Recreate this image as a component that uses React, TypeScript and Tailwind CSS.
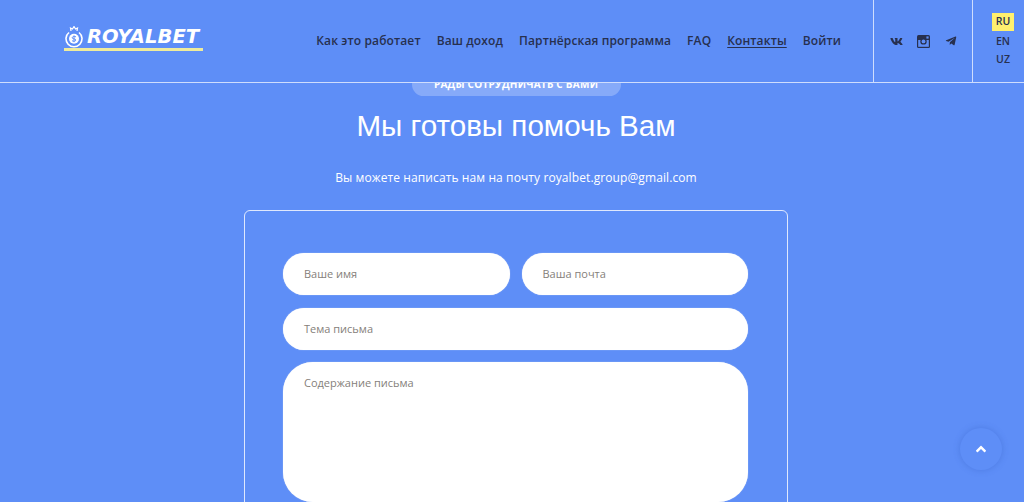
import { FaVk, FaTelegramPlane, FaAngleUp } from 'react-icons/fa'

const navLinks = ['Как это работает', 'Ваш доход', 'Партнёрская программа', 'FAQ', 'Контакты', 'Войти']

function Logo() {
  return (
    <div className="mb-[6px] flex w-[139px] flex-col">
      <div className="flex h-[23px] items-center gap-[4px]">
        <svg width="18" height="22" viewBox="0 0 18 22" fill="none" className="ml-[1px] shrink-0">
          {/* crown + coin */}
          <path d="M6 5 L5.5 2 L7.5 3 L9 0.5 L10.5 3 L12.5 2 L12 5" stroke="#fff" strokeWidth="1.2" />
          <path d="M4 6.5 A8 8 0 1 0 14 6.5" stroke="#fff" strokeWidth="1.6" />
          <circle cx="9" cy="12.8" r="5" fill="#fff" />
          <path d="M11 10.9 C9.6 10 7.2 10.4 7.2 11.8 C7.2 13.4 10.8 12.4 10.8 14 C10.8 15.4 8.2 15.6 7 14.7 M9 9.4 V16.2" stroke="#5e8ef7" strokeWidth="1" />
        </svg>
        <span className="font-['DejaVu_Sans',sans-serif] text-[19.5px] leading-[23px] font-bold tracking-[0.1px] text-white italic">ROYALBET</span>
      </div>
      <div className="h-[3px] w-full bg-[#efec9c]" />
    </div>
  )
}

function InstagramOld() {
  return (
    <svg width="13" height="13" viewBox="0 0 13 13" className="shrink-0">
      <rect width="13" height="13" rx="1.5" fill="#27304f" />
      <rect x="1.2" y="5" width="10.6" height="6.8" fill="#5e8ef7" />
      <circle cx="6.5" cy="6.4" r="3.2" fill="#27304f" />
      <circle cx="6.5" cy="6.4" r="1.9" fill="#5e8ef7" />
      <rect x="9.4" y="1.4" width="2.2" height="2.2" fill="#5e8ef7" />
    </svg>
  )
}

function Header() {
  return (
    <header className="absolute top-0 left-0 z-10 flex h-[83px] w-full items-stretch border-b border-white/70 bg-[#5e8ef7] font-['Open_Sans',sans-serif] text-[#27304f]">
      <div className="flex flex-1 items-center justify-between pr-[32px] pl-[64px]">
        <Logo />
        <nav className="flex items-center gap-[16px] text-[12px] font-semibold tracking-[0.12px]">
          {navLinks.map((link) => (
            <a key={link} className={link === 'Контакты' ? 'underline underline-offset-2' : ''}>
              {link}
            </a>
          ))}
        </nav>
      </div>
      <div className="flex w-[100px] items-center justify-center gap-[14.5px] border-x border-white/70">
        <FaVk className="h-[13px] w-[13px]" />
        <InstagramOld />
        <FaTelegramPlane className="h-[12px] w-[12px]" />
      </div>
      <div className="flex w-[51px] flex-col items-center pt-[13px] pl-[9px] text-[10.5px] font-semibold">
        <span className="flex h-[18px] w-[22px] items-center justify-center bg-[#fff06e]">RU</span>
        <span className="mt-[2px] flex h-[18px] items-center">EN</span>
        <span className="flex h-[18px] items-center">UZ</span>
      </div>
    </header>
  )
}

function Field({ label, className }: { label: string; className?: string }) {
  return (
    <div className={`h-[42px] rounded-full bg-white px-[21px] pt-[13px] text-[11px] leading-[16px] text-[#85807a] shadow-[0_0_1px_#dfe5f3] ${className ?? ''}`}>
      {label}
    </div>
  )
}

export default function App() {
  return (
    <div className="relative h-[502px] w-[1024px] overflow-hidden bg-[#5e8ef7] font-['Open_Sans',sans-serif]">
      <Header />

      <main className="flex flex-col items-center pt-[73px] pl-[8px]">
        <div className="flex h-[23px] w-[209px] items-center justify-center rounded-full bg-white/25 text-[10px] font-bold tracking-[0.25px] text-white uppercase">
          Рады сотрудничать с вами
        </div>
        <h1 className="mt-[10px] font-['Liberation_Sans',sans-serif] text-[29.6px] leading-[40px] font-normal text-white">
          Мы готовы помочь Вам
        </h1>
        <p className="mt-[23px] text-[12px] leading-[18px] tracking-[0.1px] text-white">
          Вы можете написать нам на почту royalbet.group@gmail.com
        </p>

        <form className="mt-[23px] flex w-[544px] flex-col gap-[12.5px] rounded-[6px] border border-white/80 pt-[42px] pr-[39px] pb-[40px] pl-[38px]">
          <div className="flex gap-[12px]">
            <Field label="Ваше имя" className="flex-1" />
            <Field label="Ваша почта" className="flex-1" />
          </div>
          <Field label="Тема письма" />
          <div className="h-[140px] shrink-0 rounded-[30px] bg-white px-[21px] pt-[13px] text-[11px] leading-[16px] text-[#85807a] shadow-[0_0_1px_#dfe5f3]">
            Содержание письма
          </div>
        </form>
      </main>

      <button className="absolute top-[428px] left-[960px] flex h-[42px] w-[42px] items-center justify-center rounded-full bg-[#5e8ef7] text-white shadow-[0_0_6px_rgba(50,90,190,0.35)]">
        <FaAngleUp className="h-[16px] w-[16px]" />
      </button>
    </div>
  )
}
